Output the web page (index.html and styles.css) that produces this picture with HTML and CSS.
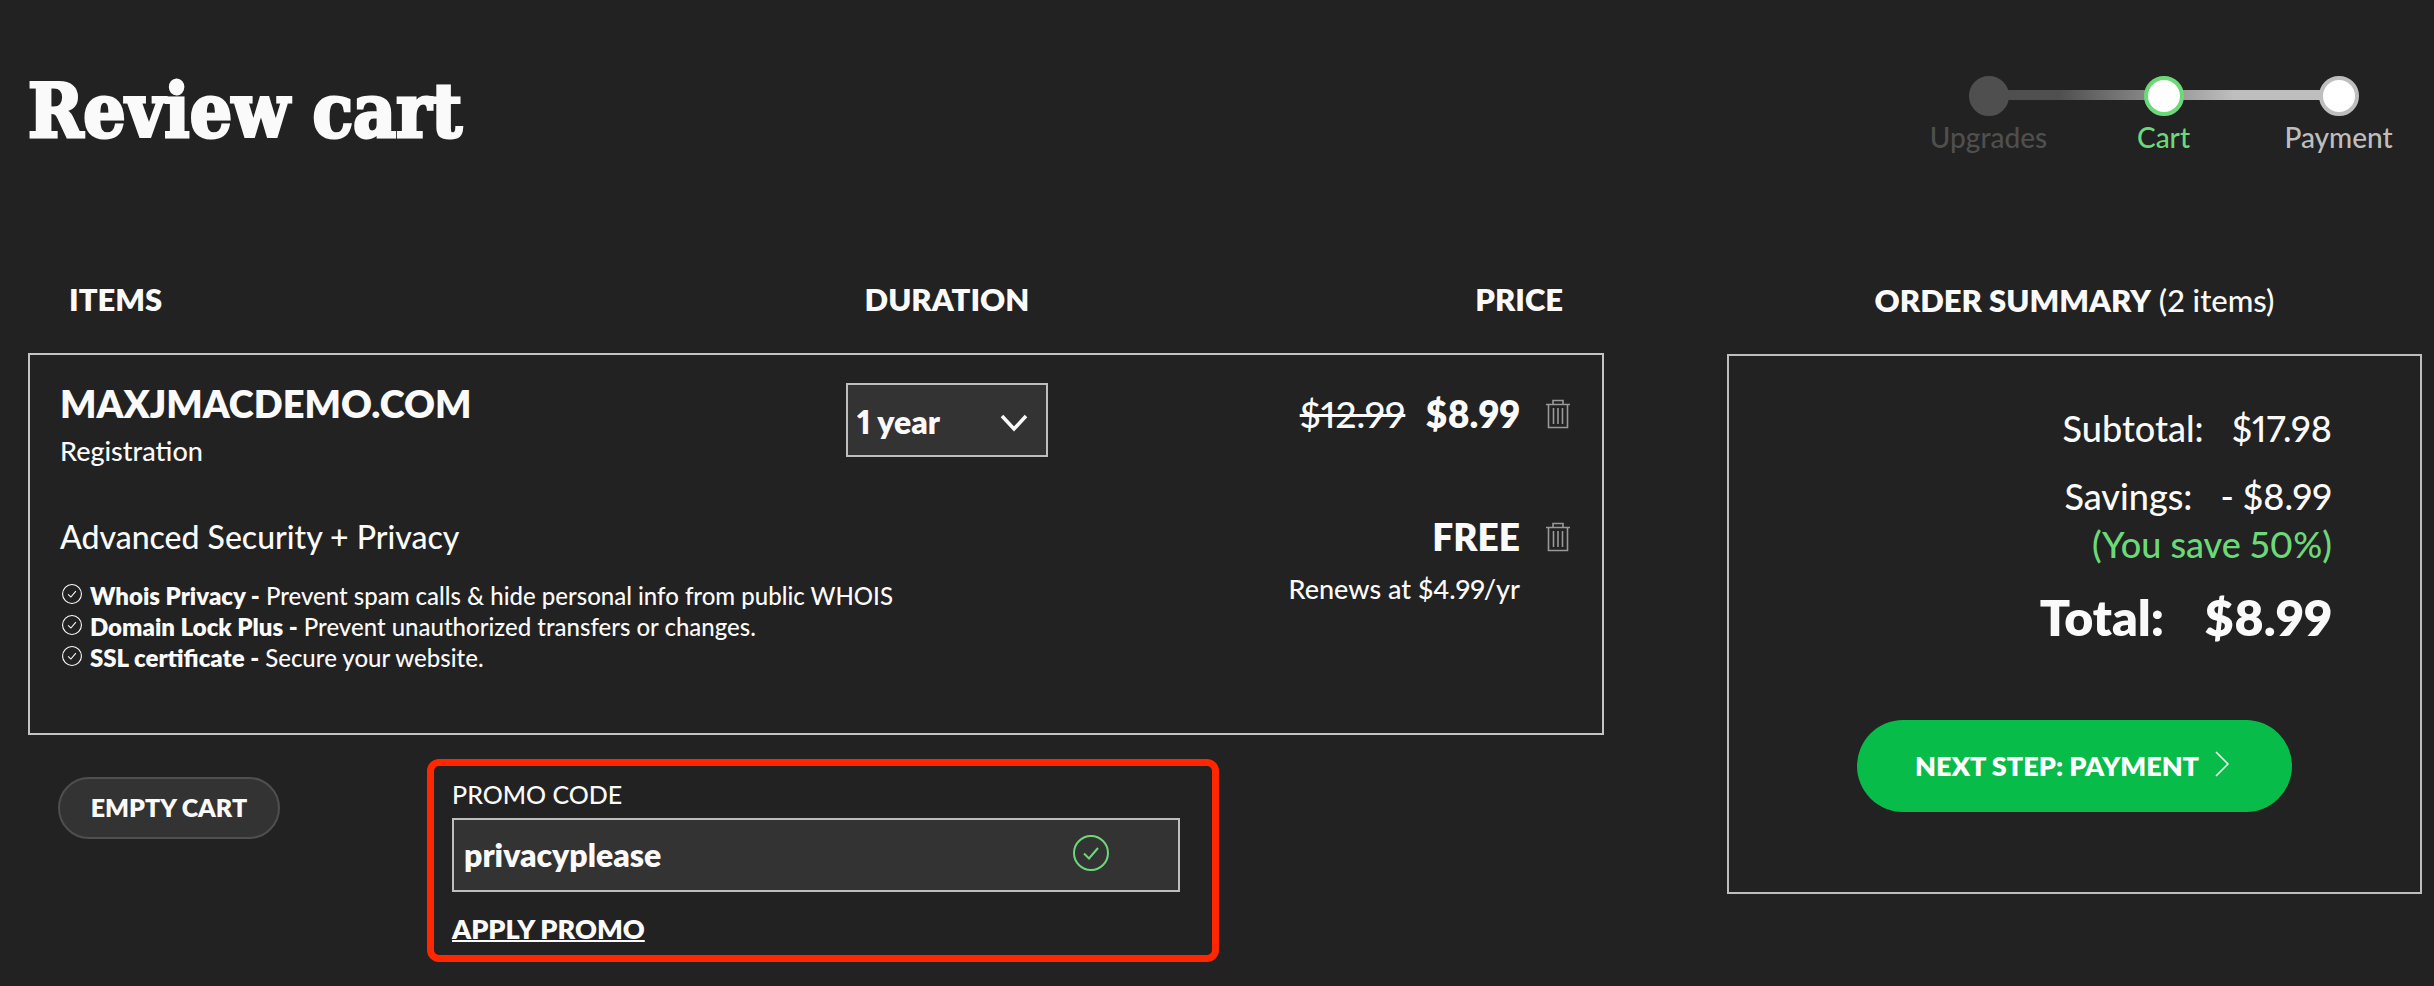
FILE: index.html
```html
<!DOCTYPE html>
<html lang="en">
<head>
<meta charset="utf-8">
<meta name="viewport" content="width=device-width, initial-scale=1">
<title>Review cart</title>
<link rel="stylesheet" href="styles.css">
</head>
<body>
<svg class="sprite" aria-hidden="true">
  <symbol id="trash" viewBox="0 0 24 30">
    <path d="M0 5.500H24M7 5V1.500H17V5M2.500 6V28.500H21.500V6M7.500 9V25M12 9V25M16.500 9V25" fill="none" stroke="currentColor" stroke-width="1.600"/>
  </symbol>
  <symbol id="tick" viewBox="0 0 36 36">
    <circle cx="18" cy="18" r="17" fill="none" stroke="currentColor" stroke-width="2"/>
    <path d="M11 18.500L16 23.500L25 13" fill="none" stroke="currentColor" stroke-width="2"/>
  </symbol>
</svg>

<header class="top">
  <h1 class="title">Review cart</h1>
  <ol class="steps">
    <li class="step step-done"><span class="dot"></span>Upgrades</li>
    <li class="step step-current" aria-current="step"><span class="dot"></span>Cart</li>
    <li class="step step-next"><span class="dot"></span>Payment</li>
  </ol>
</header>

<div class="page">
  <main>
    <table class="items">
      <colgroup><col class="col-item"><col class="col-duration"><col class="col-price"></colgroup>
      <thead>
        <tr><th class="head-item" scope="col">ITEMS</th><th class="head-duration" scope="col">DURATION</th><th class="head-price" scope="col">PRICE</th></tr>
      </thead>
      <tbody>
        <tr>
          <td class="item">
            <h2 class="domain">MAXJMACDEMO.COM</h2>
            <p class="note">Registration</p>
          </td>
          <td class="duration">
            <div class="select-box">
              <select class="select" aria-label="Duration"><option>1 year</option><option>2 years</option></select>
              <svg class="chevron" viewBox="0 0 28 18" aria-hidden="true"><path d="M2 2L14 15L26 2" fill="none" stroke="currentColor" stroke-width="3.500"/></svg>
            </div>
          </td>
          <td class="price">
            <div class="price-line"><s class="old">$12.99</s><strong>$8.99</strong>
              <button class="remove" type="button" aria-label="Remove domain"><svg class="trash"><use href="#trash"/></svg></button></div>
          </td>
        </tr>
        <tr>
          <td class="item item-extra" colspan="2">
            <h3 class="extra">Advanced Security + Privacy</h3>
            <ul class="features">
              <li><svg class="tick"><use href="#tick"/></svg><span><b>Whois Privacy -</b> Prevent spam calls &amp; hide personal info from public WHOIS</span></li>
              <li><svg class="tick"><use href="#tick"/></svg><span><b>Domain Lock Plus -</b> Prevent unauthorized transfers or changes.</span></li>
              <li><svg class="tick"><use href="#tick"/></svg><span><b>SSL certificate -</b> Secure your website.</span></li>
            </ul>
          </td>
          <td class="price price-extra">
            <div class="price-line"><strong>FREE</strong>
              <button class="remove" type="button" aria-label="Remove Advanced Security"><svg class="trash"><use href="#trash"/></svg></button></div>
            <p class="note renews">Renews at $4.99/yr</p>
          </td>
        </tr>
      </tbody>
    </table>

    <div class="actions">
      <button class="empty" type="button">EMPTY CART</button>
      <form class="promo">
        <label class="promo-label" for="promo">PROMO CODE</label>
        <div class="promo-box">
          <input class="promo-input" id="promo" type="text" value="privacyplease">
          <svg class="promo-ok" aria-hidden="true"><use href="#tick"/></svg>
        </div>
        <a class="apply" href="#">APPLY PROMO</a>
      </form>
    </div>
  </main>

  <aside class="summary">
    <h2 class="summary-head"><b>ORDER SUMMARY</b> (2 items)</h2>
    <div class="summary-box">
      <dl class="sums">
        <div class="sum"><dt>Subtotal:</dt><dd>$17.98</dd></div>
        <div class="sum"><dt>Savings:</dt><dd>- $8.99</dd></div>
      </dl>
      <p class="saved">(You save 50%)</p>
      <dl class="total"><dt>Total:</dt><dd>$8.99</dd></dl>
      <button class="next" type="button">NEXT STEP: PAYMENT
        <svg class="next-icon" viewBox="0 0 14 26" aria-hidden="true"><path d="M1 1L13 13L1 25" fill="none" stroke="currentColor" stroke-width="1.500"/></svg></button>
    </div>
  </aside>
</div>
</body>
</html>
```

FILE: styles.css
```css
* { box-sizing: border-box; }

body {
  margin: 0;
  padding: 0 12px 0 28px;
  background: #222;
  color: #fafafa;
  font: 500 28px/36px Lato, "Liberation Sans", sans-serif;
  font-variant-numeric: proportional-nums;
}

h1, h2, h3, p, ul, ol, dl, dd { margin: 0; padding: 0; }
ul, ol { list-style: none; }
button, input, select { font: inherit; color: inherit; }
b, strong { font-weight: 800; }

.sprite { display: none; }

.top {
  display: flex;
  justify-content: space-between;
  align-items: flex-start;
  padding: 64px 0 0;
  height: 280px;
}

.title {
  font: bold 74px/94px "DejaVu Serif Condensed", "DejaVu Serif", serif;
  -webkit-text-stroke: 3px currentColor;
}

.steps {
  display: flex;
  margin: 12px -4px 0 0;
  width: 525px;
  background: linear-gradient(90deg, #4f4f4f 20%, #bebebe 70%) center 14px / 350px 10px no-repeat;
}

.step { flex: 1; display: flex; flex-direction: column; align-items: center; line-height: 42px; }
.dot { width: 40px; height: 40px; border: 4px solid; border-radius: 50%; background: #fff; }
.step-done { color: #4f4f4f; }
.step-done .dot { background: #4f4f4f; }
.step-current { color: #6cd979; }
.step-next { color: #bebebe; }

.page {
  display: grid;
  grid-template-columns: minmax(0, 1576fr) minmax(0, 695fr);
  column-gap: 123px;
  align-items: start;
}

.items { width: 100%; table-layout: fixed; border-collapse: collapse; }
.items tbody { border: 2px solid #c4c4c4; }
.col-item { width: 50%; }
.col-duration { width: 262px; }
.items th { height: 74px; padding: 0; vertical-align: top; font-size: 31px; font-weight: 800; line-height: 38px; }
.items .head-item { padding-left: 40px; text-align: left; }
.items .head-price { padding-right: 40px; text-align: right; }
.items td { padding: 0; vertical-align: top; }

.items .item { padding: 24px 0 0 30px; }
.domain { font-size: 38px; font-weight: 800; line-height: 48px; }
.note { font-size: 27px; line-height: 48px; }

.items .duration { padding-top: 28px; }
.select-box { position: relative; width: 202px; margin: 0 auto; }
.select {
  display: block;
  width: 100%;
  height: 74px;
  padding: 4px 9px 0;
  appearance: none;
  border: 2px solid #bebebe;
  border-radius: 0;
  background: #333;
  font-size: 32px;
  font-weight: 800;
}
.chevron { position: absolute; right: 20px; top: 31px; width: 28px; height: 18px; pointer-events: none; }

.items .price { padding: 35px 32px 0 0; text-align: right; }
.price-line { display: flex; justify-content: flex-end; align-items: center; font-size: 37px; line-height: 48px; }
.old { margin-right: 20px; }
.remove { display: flex; margin-left: 26px; padding: 0; border: 0; background: none; color: #999; }
.trash { width: 24px; height: 30px; }
.renews { padding-right: 50px; padding-top: 4px; }

.items .item-extra { padding: 40px 0 60px 30px; }
.extra { font-size: 32px; font-weight: 500; line-height: 44px; }
.features { margin-top: 21px; font-size: 24px; line-height: 31px; }
.features li { display: flex; align-items: flex-start; gap: 8px; }
.tick { flex: none; width: 20px; height: 20px; margin: 4px 0 0 2px; }
.items .price-extra { padding-top: 38px; }

.actions { display: flex; align-items: flex-start; padding: 24px 0 0 30px; }
.empty {
  width: 222px;
  height: 62px;
  margin-top: 18px;
  padding: 0 0 2px;
  border: 2px solid #4f4f4f;
  border-radius: 31px;
  background: #333;
  font-size: 25px;
  font-weight: 800;
}
.promo {
  width: 792px;
  margin-left: 147px;
  padding: 12px 32px 8px 18px;
  border: 7px solid #ff2600;
  border-radius: 12px;
}
.promo-label { display: block; font-size: 25px; line-height: 32px; padding-bottom: 8px; }
.promo-box { position: relative; }
.promo-input {
  display: block;
  width: 100%;
  height: 74px;
  padding: 0 10px 2px;
  border: 2px solid #bebebe;
  border-radius: 0;
  background: #333;
  font-size: 32px;
  font-weight: 800;
}
.promo-ok { position: absolute; right: 71px; top: 17px; width: 36px; height: 36px; color: #6cd979; }
.apply {
  display: inline-block;
  margin-top: 19px;
  color: inherit;
  font-size: 27px;
  font-weight: 800;
  text-decoration-thickness: 2px;
}

.summary-head { height: 74px; text-align: center; font-size: 31px; font-weight: 500; line-height: 40px; }
.summary-box {
  display: flex;
  flex-direction: column;
  align-items: flex-end;
  padding: 48px 88px 80px 20px;
  border: 2px solid #bebebe;
  font-size: 36px;
  line-height: 48px;
}
.sum { display: flex; justify-content: flex-end; gap: 28px; margin-bottom: 20px; }
.saved { margin-top: -20px; color: #6cd979; }
.total { display: flex; gap: 40px; margin-top: 20px; font-size: 50px; font-weight: 800; line-height: 58px; }
.next {
  display: flex;
  justify-content: center;
  align-items: center;
  align-self: center;
  gap: 16px;
  width: 435px;
  height: 92px;
  margin: 74px 0 0 68px;
  padding: 0 5px 0 0;
  border: 0;
  border-radius: 46px;
  background: #08bc49;
  color: #fff;
  font-size: 27px;
  font-weight: 800;
}
.next-icon { width: 14px; height: 26px; margin-bottom: 4px; }
```
